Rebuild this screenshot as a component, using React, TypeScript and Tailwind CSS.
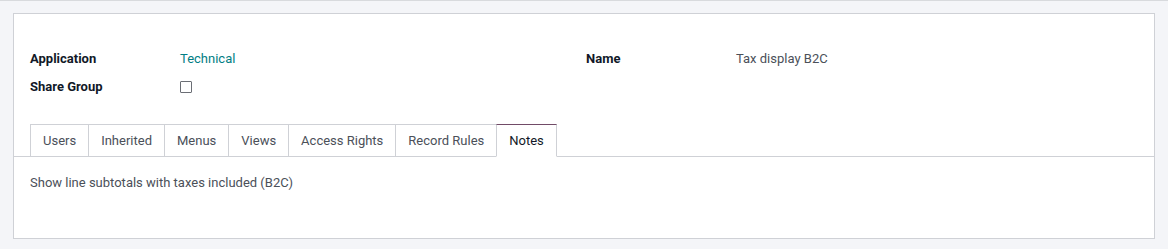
import React from "react";

const tabs = ["Users", "Inherited", "Menus", "Views", "Access Rights", "Record Rules", "Notes"];

export default function App() {
  return (
    <div
      className="w-[1168px] h-[249px] bg-[#f4f5f8] border-t border-[#d8dadd] pt-3 px-[13px] overflow-hidden"
      style={{ fontFamily: "Roboto, 'Liberation Sans', sans-serif" }}
    >
      <div className="bg-white border border-[#cfd1d6] h-[226px] px-4 text-[13px]">
        <div className="flex pt-[31px]">
          <div className="w-[556px]">
            <div className="flex h-[28px] items-center">
              <div className="w-[150px] font-bold text-[#111827]">Application</div>
              <div className="text-[#017e84]">Technical</div>
            </div>
            <div className="flex h-[28px] items-center">
              <div className="w-[150px] font-bold text-[#111827]">Share Group</div>
              <div className="w-[12px] h-[12px] border border-[#6b6e75] rounded-[1px] bg-white" />
            </div>
          </div>
          <div>
            <div className="flex h-[28px] items-center">
              <div className="w-[150px] font-bold text-[#111827]">Name</div>
              <div className="text-[#4b5059]">Tax display B2C</div>
            </div>
          </div>
        </div>
        <div className="mt-[23px] -mx-4 px-4 flex border-b border-[#cfd1d6]">
          {tabs.map((t) => {
            const active = t === "Notes";
            return (
              <div
                key={t}
                className={
                  active
                    ? "h-[33px] -mb-px px-3 flex items-center bg-white border border-[#cfd1d6] border-t-[#714b67] border-b-white text-[#111827]"
                    : "h-[32px] px-3 flex items-center border-t border-l border-[#cfd1d6] text-[#4b5059] [&:nth-child(6)]:border-r-0"
                }
              >
                {t}
              </div>
            );
          })}
        </div>
        <div className="pt-[16px] text-[#4b5059]">Show line subtotals with taxes included (B2C)</div>
      </div>
    </div>
  );
}
